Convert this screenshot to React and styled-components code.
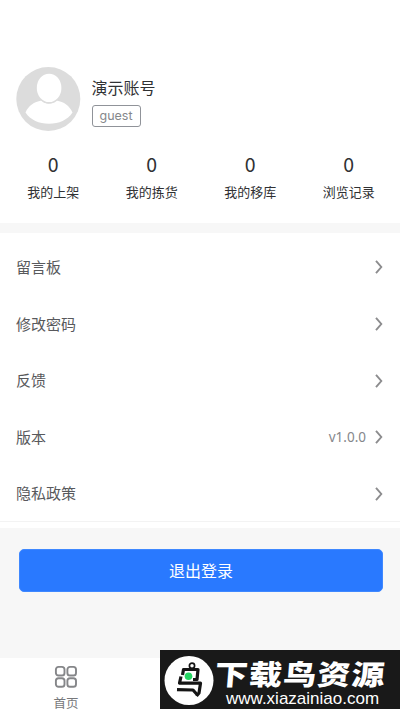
import React from 'react'
import styled, { createGlobalStyle } from 'styled-components'

const stats = [
  { label: '我的上架', value: 0 },
  { label: '我的拣货', value: 0 },
  { label: '我的移库', value: 0 },
  { label: '浏览记录', value: 0 },
]

const menu = [
  { title: '留言板' },
  { title: '修改密码' },
  { title: '反馈' },
  { title: '版本', value: 'v1.0.0' },
  { title: '隐私政策' },
]

const Avatar = () => (
  <svg width="65" height="65" viewBox="0 0 65 65">
    <circle cx="32.3" cy="33" r="32" fill="#dcdcdc" />
    <path
      d="M9.500 46.500C12.500 39.500 18 36 25.500 34.500C29.500 38.800 36 38.800 40.500 34.500C48 36 53.500 39.500 56.500 46.500C51.500 54 43 57.800 33 57.800C23 57.800 14.500 54 9.500 46.500Z"
      fill="#fff"
    />
    <ellipse cx="33.1" cy="21.900" rx="13.600" ry="15.600" fill="#dcdcdc" />
    <ellipse cx="33.1" cy="21.900" rx="12.300" ry="14.200" fill="#fff" />
  </svg>
)

const Arrow = () => (
  <svg width="8" height="14" viewBox="0 0 8 14" fill="none" stroke="#8c8c8e" strokeWidth="1.9">
    <path d="M1 0.800L6.300 7L1 13.200" />
  </svg>
)

const HomeIcon = () => (
  <svg width="24" height="24" viewBox="0 0 24 24" fill="none" stroke="#858689" strokeWidth="1.900">
    <rect x="1.900" y="1.900" width="8.600" height="8.600" rx="2.600" />
    <rect x="13.400" y="1.900" width="8.600" height="8.600" rx="2.600" />
    <rect x="1.900" y="13.200" width="8.600" height="8.600" rx="2.600" />
    <rect x="13.400" y="13.200" width="8.600" height="8.600" rx="2.600" />
  </svg>
)

const BirdLogo = () => (
  <svg width="50" height="50" viewBox="0 0 50 50">
    <circle cx="25" cy="25.500" r="24.500" fill="#fff" />
    <g fill="none" stroke="#151515" strokeWidth="3.200" strokeLinejoin="round">
      <circle cx="28" cy="10.700" r="2.600" strokeWidth="1.700" />
      <path d="M18.500 20L19.500 14.500H34L33 24.500H29" />
      <path d="M17 21.500L15.500 28.200H36.500L35 38L32.500 41" />
      <path d="M13 34.600L29 35L33.500 40" />
    </g>
    <circle cx="24.500" cy="21.200" r="3.800" fill="#25d663" />
  </svg>
)

const App = () => {
  return (
    <Page>
      <GlobalStyle />
      <Header>
        <User>
          <Avatar />
          <div>
            <h2>演示账号</h2>
            <Tag>guest</Tag>
          </div>
        </User>
        <Stats>
          {stats.map((item) => (
            <Stat key={item.label}>
              <strong>{item.value}</strong>
              <span>{item.label}</span>
            </Stat>
          ))}
        </Stats>
      </Header>
      <Menu>
        {menu.map((item) => (
          <Cell key={item.title}>
            <span>{item.title}</span>
            <CellRight>
              {item.value}
              <Arrow />
            </CellRight>
          </Cell>
        ))}
      </Menu>
      <Footer>
        <Logout>退出登录</Logout>
      </Footer>
      <TabBar>
        <Tab>
          <HomeIcon />
          <span>首页</span>
        </Tab>
      </TabBar>
      <Watermark>
        <BirdLogo />
        <div>
          <b>下载鸟资源</b>
          <p>www.xiazainiao.com</p>
        </div>
      </Watermark>
    </Page>
  )
}

export default App

const GlobalStyle = createGlobalStyle`
  * {
    box-sizing: border-box;
    margin: 0;
    padding: 0;
  }
  body {
    background: #f7f7f7;
    overflow: hidden;
  }
  svg {
    display: block;
    flex-shrink: 0;
  }
`

const Page = styled.div`
  position: relative;
  display: flex;
  flex-direction: column;
  width: 400px;
  height: 711px;
  overflow: hidden;
  background: #f7f7f7;
  font-family: "Noto Sans CJK SC", sans-serif;
`

const Header = styled.header`
  height: 223px;
  padding-top: 66px;
  background: #fff;
`

const User = styled.div`
  display: flex;
  gap: 10.5px;
  padding-left: 16px;
  h2 {
    margin-top: 9px;
    color: #303133;
    font-size: 16px;
    font-weight: 400;
    line-height: 24px;
  }
`

const Tag = styled.span`
  display: block;
  width: 49px;
  height: 22px;
  margin-top: 6px;
  border: 1px solid #909399;
  border-radius: 3px;
  color: #85878b;
  font-family: Inter, sans-serif;
  font-size: 12.5px;
  line-height: 20px;
  text-align: center;
`

const Stats = styled.div`
  display: grid;
  grid-template-columns: repeat(4, 1fr);
  margin-top: 21px;
  padding: 0 2px 0 4px;
`

const Stat = styled.div`
  display: flex;
  flex-direction: column;
  align-items: center;
  color: #303133;
  strong {
    font-size: 19.5px;
    font-weight: 400;
    line-height: 24px;
  }
  span {
    margin-top: 6px;
    font-size: 13px;
    line-height: 20px;
  }
`

const Menu = styled.section`
  height: 295px;
  margin-top: 10px;
  padding-top: 6px;
  background: #fff;
`

const Cell = styled.div`
  display: flex;
  align-items: center;
  justify-content: space-between;
  height: 56.7px;
  padding: 0 17px 0 16px;
  color: #58595c;
  font-size: 15px;
  > span {
    padding-bottom: 2px;
  }
  &:last-child {
    border-bottom: 1px solid #f3f3f3;
  }
`

const CellRight = styled.div`
  display: flex;
  align-items: center;
  gap: 9px;
  color: #85878b;
  font-family: "Noto Sans", sans-serif;
  font-size: 13.5px;
`

const Footer = styled.div`
  flex: 1;
  padding: 21px 17px 0 19px;
`

const Logout = styled.button`
  display: block;
  width: 100%;
  height: 43px;
  padding-bottom: 2px;
  border: 1px solid #3f88ff;
  border-radius: 5px;
  background: #2979ff;
  color: #fff;
  font-family: inherit;
  font-size: 16px;
`

const TabBar = styled.nav`
  display: flex;
  height: 53px;
  background: #fff;
`

const Tab = styled.div`
  display: flex;
  flex-direction: column;
  align-items: center;
  width: 132px;
  padding-top: 7px;
  color: #77787b;
  font-size: 12.5px;
  line-height: 18px;
  span {
    margin-top: 5px;
  }
`

const Watermark = styled.div`
  position: absolute;
  right: 0;
  bottom: 2px;
  display: flex;
  gap: 3px;
  width: 240px;
  height: 59px;
  padding: 5px 0 0 4px;
  background: #191919;
  color: #fff;
  white-space: nowrap;
  b {
    display: block;
    margin-left: -2px;
    font-size: 33px;
    font-weight: 900;
    letter-spacing: 1.2px;
    line-height: 36px;
    transform: scaleY(0.85) skewX(-4deg);
  }
  p {
    margin: 0 0 0 9px;
    font-family: "Liberation Sans", sans-serif;
    font-size: 17px;
    line-height: 16px;
  }
`
